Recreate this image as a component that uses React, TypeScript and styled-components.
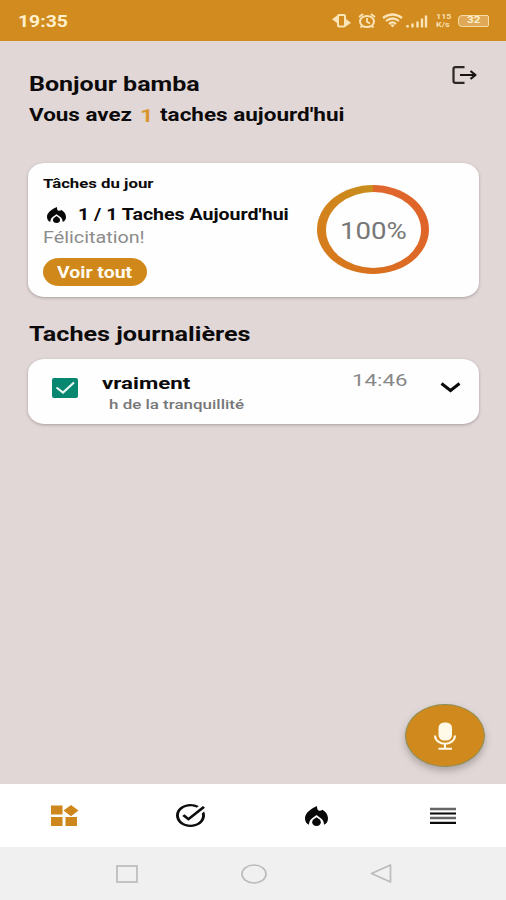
import React from "react";
import styled, { createGlobalStyle } from "styled-components";

const Global = createGlobalStyle`
  * { box-sizing: border-box; }
  body { margin: 0; background: #e1d7d7; font-family: Roboto, "Liberation Sans", sans-serif; }
`;

const Screen = styled.div`
  width: 506px;
  height: 900px;
  display: flex;
  flex-direction: column;
  overflow: hidden;
  background: #e1d7d7;
  color: #0c0a0a;
`;

const Label = styled.span<{ $size: number; $w?: number; $stretch?: number; $color?: string; $line?: number }>`
  display: block;
  font-size: ${(p) => p.$size}px;
  font-weight: ${(p) => p.$w ?? 700};
  line-height: ${(p) => p.$line ?? 24}px;
  color: ${(p) => p.$color ?? "inherit"};
  white-space: pre;
  transform: scaleX(${(p) => p.$stretch ?? 1.27});
  transform-origin: left center;
`;

const StatusBar = styled.header`
  height: 41px;
  flex: none;
  background: #d18b1e;
  display: flex;
  align-items: center;
  justify-content: space-between;
  padding: 0 17px 0 18px;
`;

const Icon = styled.svg`
  display: block;
  flex: none;
  overflow: visible;
`;

const Main = styled.main`
  flex: 1;
  display: flex;
  flex-direction: column;
  padding: 31px 27px 0 28px;
`;

const Greeting = styled.section`
  height: 91px;
  display: flex;
  justify-content: space-between;
  padding: 0 2px 0 1px;
`;

const LogoutButton = styled.div`
  margin-top: -6px;
`;

const CountLine = styled.div`
  display: grid;
  grid-template-columns: 111px 20px auto;
  margin-top: 7px;
`;

const Card = styled.section`
  background: #fefefe;
  border-radius: 17px / 14px;
  box-shadow: 0 1px 3px rgba(70, 50, 50, 0.35);
`;

const SummaryCard = styled(Card)`
  height: 134px;
  display: grid;
  grid-template-columns: 275px 112px;
  padding: 10px 15px 0 15px;
`;

const SummaryRow = styled.div`
  display: flex;
  align-items: center;
  height: 22px;
  margin-top: 9px;
  padding-left: 4px;
  gap: 12px;
`;

const Congrats = styled.div`
  padding-top: 1px;
`;

const SeeAll = styled.div`
  width: 104px;
  height: 28px;
  margin-top: 9px;
  padding-left: 14px;
  border-radius: 16px / 14px;
  background: #cf8819;
  color: #fffaf0;
`;

const Ring = styled.div`
  width: 112px;
  height: 89px;
  margin: 12px 0 0 -1px;
  padding: 6.5px 8.5px;
  border-radius: 50%;
  background: conic-gradient(#df672e 0deg, #df6429 80deg, #d9711f 180deg, #d4811c 280deg, #c78e1c 360deg);
`;

const RingCore = styled.div`
  height: 100%;
  border-radius: 50%;
  background: #fefefe;
  padding: 27px 0 0 14.5px;
`;

const SectionTitle = styled.div`
  padding: 24px 0 12px 1px;
`;

const TaskCard = styled(Card)`
  height: 65px;
  display: grid;
  grid-template-columns: 50px 250px 87px 24px;
  padding-left: 24px;
`;

const TaskText = styled.div`
  padding-top: 12px;
`;

const Note = styled.div`
  padding-left: 7px;
`;

const Slot = styled.div<{ $top: number }>`
  padding-top: ${(p) => p.$top}px;
`;

const VoiceButton = styled.div`
  width: 80px;
  height: 63px;
  margin: auto -6px 17px auto;
  border-radius: 50%;
  border: 1px solid #89905a;
  background: #d0891c;
  box-shadow: 0 4px 7px rgba(80, 70, 70, 0.35);
  display: grid;
  place-items: center;
`;

const TabBar = styled.nav`
  height: 63px;
  flex: none;
  background: #fff;
  display: grid;
  grid-template-columns: repeat(4, 1fr);
  place-items: center;
  padding-left: 1px;
`;

const SystemBar = styled.footer`
  height: 53px;
  flex: none;
  background: #f0f0f0;
  display: grid;
  grid-template-columns: repeat(3, 127px);
  justify-content: center;
  place-items: center;
  padding-left: 1px;
`;

const Flame = ({ w, h }: { w: number; h: number }) => (
  <Icon width={w} height={h} viewBox="0 0 23 20" preserveAspectRatio="none" fill="#080808">
    <path d="M12 0C12 2.500 12.500 4.500 14.200 4.800Q16 5 17.500 3.800C21 6 23 9 23 12.500C23 15.500 21.500 17.800 19 18.800C19 16 18 14 15.800 12.300L11.500 9L7.200 12.300C5 14 4 16 4 18.800C1.500 17.800 0 15.500 0 12.200C0 7.500 5 3 12 0z" />
    <path d="M11.500 11.200L14.300 13.300Q15.800 14.500 15.800 16.200C15.800 18.300 14 20 11.500 20S7.200 18.300 7.200 16.200Q7.200 14.500 8.700 13.300z" />
  </Icon>
);

const Rate = styled.div`
  width: 22px;
  flex: none;
`;

const StatusIcons = styled.div`
  display: flex;
  align-items: center;
`;

const Battery = styled.div`
  width: 31px;
  height: 12px;
  border: 1.5px solid #f8dca6;
  border-radius: 4px 2px 2px 4px;
  background: #dfa957;
  padding-left: 8px;
`;

const StatusGlyphs = () => (
  <Icon width="104" height="20" viewBox="0 0 104 20" fill="none" stroke="#fbe4b8" strokeWidth="1.8">
    <rect x="6" y="4" width="7" height="11.500" rx="1" strokeWidth="2" />
    <path d="M5 4.500V12L0 8.200zM14 8v7.500L19 11.700z" fill="#fbe4b8" stroke="none" />
    <ellipse cx="35" cy="10.500" rx="7" ry="5.600" strokeWidth="2" />
    <path d="M35 7v4l3 1.300M27 6l4-3M39 3l4 3M30 15l-1.500 1.500M40 15l1.500 1.500" strokeWidth="1.800" />
    <path d="M51 7Q60.500 0 70 7M54 10Q60.500 5 67 10M57 12.800Q60.500 10 64 12.800" strokeWidth="2.200" />
    <path d="M58 13.500h5L60.500 16.500z" fill="#fbe4b8" stroke="none" />
    <path d="M75.500 14v2.500M80.500 12.500v4M85.500 10.500v6M90 7.500v9M94 4.500v12" strokeWidth="2.400" />
  </Icon>
);

export default function App() {
  return (
    <Screen>
      <Global />
      <StatusBar>
        <Label $size={17} $stretch={1.14} $color="#fff0cc">19:35</Label>
        <StatusIcons>
          <StatusGlyphs />
          <Rate>
            <Label $size={7.5} $line={8} $stretch={1.2} $color="#f8dfae">115</Label>
            <Label $size={7.5} $line={8} $stretch={1.2} $color="#f8dfae">K/s</Label>
          </Rate>
          <Battery>
            <Label $size={9} $line={9} $stretch={1.3} $color="#fff0cc">32</Label>
          </Battery>
        </StatusIcons>
      </StatusBar>

      <Main>
        <Greeting>
          <div>
            <Label $size={20} $stretch={1.25}>Bonjour bamba</Label>
            <CountLine>
              <Label $size={17.5} $stretch={1.28}>Vous avez</Label>
              <Label $size={18.5} $line={27} $color="#d9962f">1</Label>
              <Label $size={17.5} $stretch={1.285}>taches aujourd'hui</Label>
            </CountLine>
          </div>
          <LogoutButton>
            <Icon width="25" height="18" viewBox="0 0 25 18" fill="none" stroke="#171313" strokeWidth="2.200">
              <path d="M12.500 1.200H3.500Q1.500 1.200 1.500 3v12Q1.500 16.800 3.500 16.800H12.500" stroke="#2c2626" />
              <path d="M8 9h14.500M18.500 5l5 4-5 4" strokeLinejoin="round" />
            </Icon>
          </LogoutButton>
        </Greeting>

        <SummaryCard>
          <div>
            <Label $size={13} $line={22} $stretch={1.29}>Tâches du jour</Label>
            <SummaryRow>
              <Flame w={19} h={16} />
              <Label $size={16} $stretch={1.222}>1 / 1 Taches Aujourd'hui</Label>
            </SummaryRow>
            <Congrats><Label $size={16} $w={400} $color="#8c8c8c" $line={22} $stretch={1.235}>Félicitation!</Label></Congrats>
            <SeeAll><Label $size={16} $line={29} $stretch={1.215}>Voir tout</Label></SeeAll>
          </div>
          <Ring><RingCore><Label $size={23} $line={26} $w={400} $stretch={1.2} $color="#777">100%</Label></RingCore></Ring>
        </SummaryCard>

        <SectionTitle><Label $size={21} $line={26} $stretch={1.2}>Taches journalières</Label></SectionTitle>

        <TaskCard>
          <Slot $top={19}>
            <Icon width="26" height="20" viewBox="0 0 26 20">
              <rect width="26" height="20" rx="2" fill="#078670" />
              <path d="M4.500 9.500l6.500 5L22 4.500" fill="none" stroke="#e9f7f3" strokeWidth="2.200" />
            </Icon>
          </Slot>
          <TaskText>
            <Label $size={17} $stretch={1.31}>vraiment</Label>
            <Note><Label $size={13.5} $line={18} $w={500} $color="#777" $stretch={1.255}>h de la tranquillité</Label></Note>
          </TaskText>
          <Slot $top={9}><Label $size={17} $w={400} $stretch={1.31} $color="#888">14:46</Label></Slot>
          <Slot $top={23}>
            <Icon width="22" height="11" viewBox="0 0 22 11">
              <path d="M2.500 1.500l9 7 9-7" fill="none" stroke="#0c0c0c" strokeWidth="3" />
            </Icon>
          </Slot>
        </TaskCard>

        <VoiceButton>
          <Icon width="22" height="28" viewBox="0 0 22 28" fill="none" stroke="#fff9e8" strokeWidth="2.100">
            <rect x="4.500" y="0.500" width="13.500" height="18" rx="5.500" fill="#fff9e8" stroke="none" />
            <path d="M1 13.500C1.500 24.500 20.500 24.500 21 13.500M11 21v6M4.500 26.800h13.500" />
          </Icon>
        </VoiceButton>
      </Main>

      <TabBar>
        <Icon width="27" height="21" viewBox="0 0 27 21" fill="#cd871c">
          <path d="M0 0.500h11.500V9.500H0zM0 12h11.500V21H0zM14.500 12h11.500V21h-11.500zM20 0l7.500 5.500L20 11.200l-7.500-5.700z" />
        </Icon>
        <Icon width="29" height="23" viewBox="2 2 20 20" preserveAspectRatio="none" fill="#0c0c0c">
          <path d="M22 5.180L10.590 16.600l-4.240-4.240 1.410-1.410 2.830 2.830 10-10L22 5.180zm-2.210 5.040c.13.570.21 1.170.21 1.780 0 4.420-3.580 8-8 8s-8-3.580-8-8 3.580-8 8-8c1.580 0 3.040.46 4.280 1.250l1.440-1.440A9.900 9.900 0 0 0 12 2C6.480 2 2 6.480 2 12s4.480 10 10 10 10-4.480 10-10c0-1.190-.22-2.330-.6-3.390l-1.610 1.610z" />
        </Icon>
        <Flame w={23} h={20} />
        <Icon width="26" height="18" viewBox="0 0 26 18">
          <path d="M0 2h26M0 11h26" stroke="#666" strokeWidth="2.600" />
          <path d="M0 6.500h26M0 15.800h26" stroke="#090909" strokeWidth="2.200" />
        </Icon>
      </TabBar>

      <SystemBar>
        <Icon width="22" height="18" viewBox="0 0 22 18"><rect x="1" y="1" width="20" height="16" fill="none" stroke="#bbb" strokeWidth="1.700" /></Icon>
        <Icon width="26" height="20" viewBox="0 0 26 20"><ellipse cx="13" cy="10" rx="12" ry="9" fill="none" stroke="#bbb" strokeWidth="1.700" /></Icon>
        <Icon width="22" height="19" viewBox="0 0 22 19"><path d="M20.500 1v17L1.500 9.500z" fill="none" stroke="#bbb" strokeWidth="1.700" strokeLinejoin="round" /></Icon>
      </SystemBar>
    </Screen>
  );
}
